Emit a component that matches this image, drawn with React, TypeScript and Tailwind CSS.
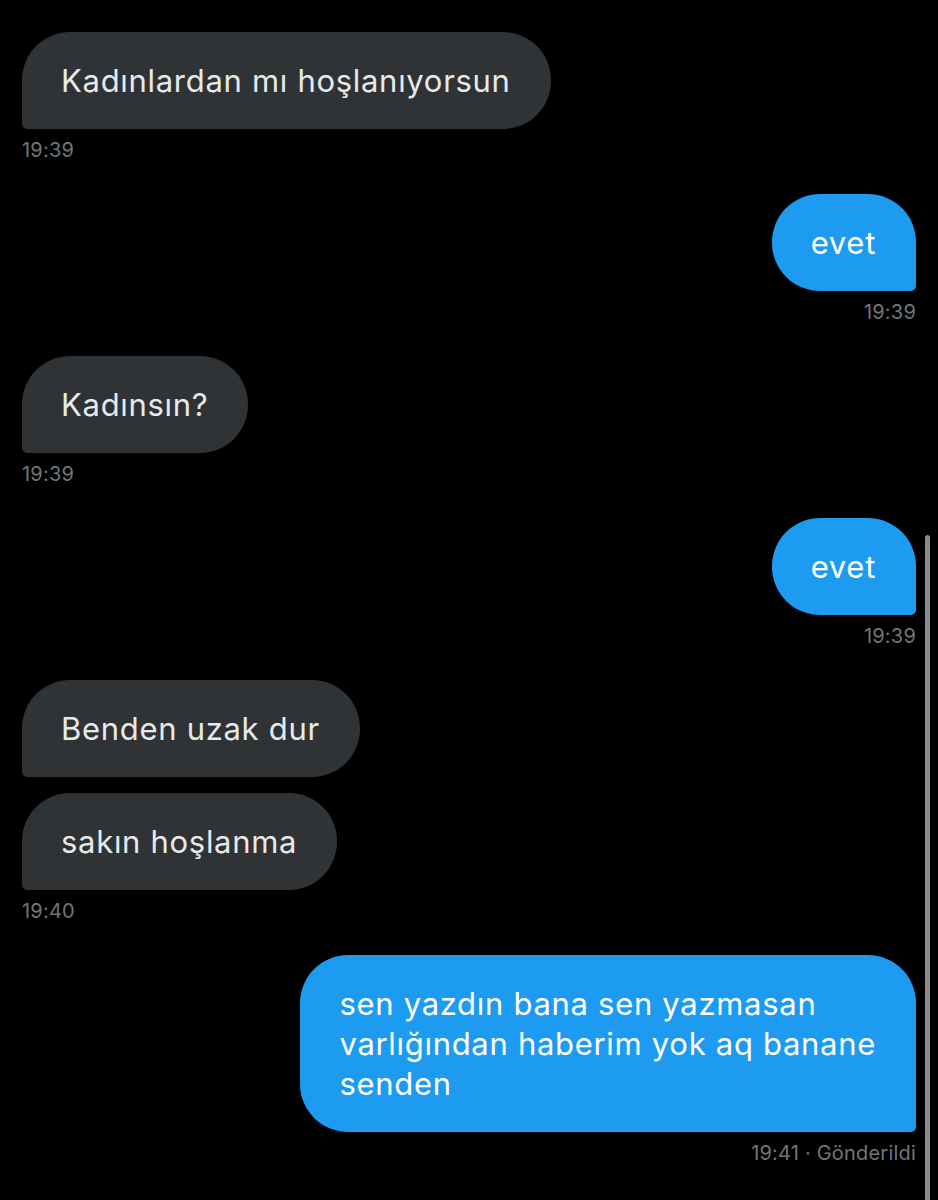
import React from "react";

const groups: { side: "in" | "out"; bubbles: string[][]; time: string }[] = [
  { side: "in", bubbles: [["Kadınlardan mı hoşlanıyorsun"]], time: "19:39" },
  { side: "out", bubbles: [["evet"]], time: "19:39" },
  { side: "in", bubbles: [["Kadınsın?"]], time: "19:39" },
  { side: "out", bubbles: [["evet"]], time: "19:39" },
  { side: "in", bubbles: [["Benden uzak dur"], ["sakın hoşlanma"]], time: "19:40" },
  {
    side: "out",
    bubbles: [["sen yazdın bana sen yazmasan", "varlığından haberim yok aq banane", "senden"]],
    time: "19:41 · Gönderildi",
  },
];

export default function App() {
  return (
    <div
      className="relative w-[938px] h-[1200px] bg-black overflow-hidden"
      style={{ fontFamily: "Inter, 'Noto Sans', sans-serif" }}
    >
      <div className="flex flex-col px-[22px] pt-[32px]">
        {groups.map((g, i) => (
          <div key={i} className={`flex flex-col ${g.side === "in" ? "items-start" : "items-end"} mb-[32px]`}>
            <div className="flex flex-col gap-[16px] w-full">
              {g.bubbles.map((lines, j) => (
                <div key={j} className={`flex w-full ${g.side === "in" ? "justify-start" : "justify-end"}`}>
                  <div
                    className={
                      g.side === "in"
                        ? "bg-[#2f3336] text-[#e7e9ea] rounded-[48px] rounded-bl-[5px] pl-[39px] pr-[40px] pt-[29px] pb-[28px] text-[31px] leading-[40px] tracking-[0.7px]"
                        : "bg-[#1d9bf0] text-white rounded-[48px] rounded-br-[5px] pl-[39px] pr-[40px] pt-[29px] pb-[28px] text-[31px] leading-[40px] tracking-[0.7px]"
                    }
                  >
                    {lines.map((l, k) => (
                      <div key={k} className="whitespace-nowrap">{l}</div>
                    ))}
                  </div>
                </div>
              ))}
            </div>
            <div className="mt-[9px] text-[20px] leading-[24px] text-[#71767b] tracking-[0.2px]">{g.time}</div>
          </div>
        ))}
      </div>
      <div className="absolute right-[8px] top-[535px] w-[5px] h-[700px] rounded-full bg-[#8a8a8a]" />
    </div>
  );
}
